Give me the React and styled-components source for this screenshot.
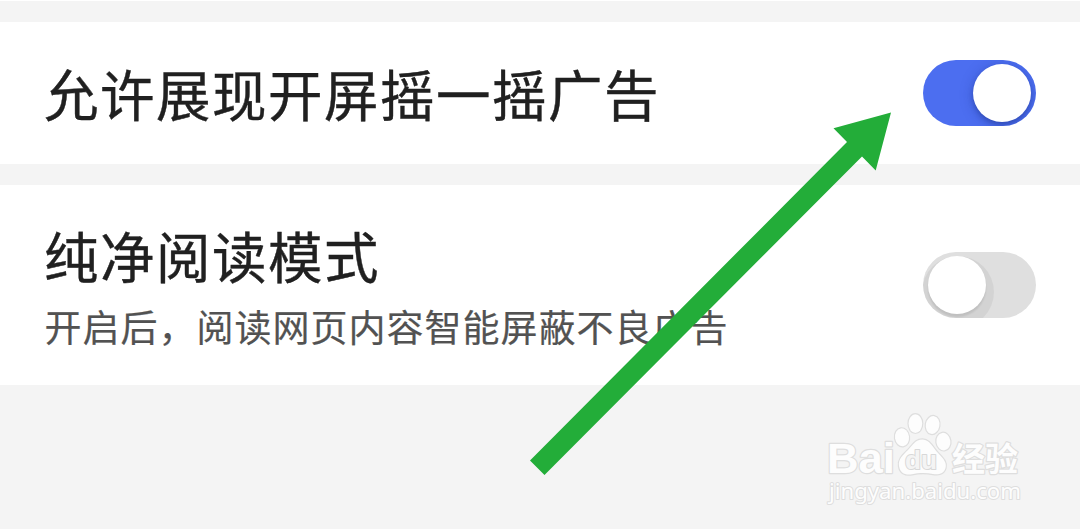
import React from "react";
import styled, { createGlobalStyle } from "styled-components";

const GlobalStyle = createGlobalStyle`
  * { box-sizing: border-box; }
  body {
    margin: 0;
    background: #f4f4f4;
    font-family: "Noto Sans CJK SC", sans-serif;
  }
`;

const Page = styled.main`
  position: relative;
  display: flex;
  flex-direction: column;
  gap: 21px;
  width: 1080px;
  height: 529px;
  overflow: hidden;
  background: #f4f4f4;
  border-top: 1px solid #fff;
  padding-top: 21px;
`;

const SettingRow = styled.section`
  display: flex;
  flex: none;
  align-items: center;
  justify-content: space-between;
  height: ${(p) => p.$height}px;
  padding: 0 44px;
  background: #fff;
`;

const Labels = styled.div`
  display: flex;
  flex-direction: column;
  gap: 13px;
  padding-top: ${(p) => p.$drop || 0}px;
`;

const Title = styled.h2`
  margin: 0;
  font-size: 54.5px;
  font-weight: 400;
  line-height: 64px;
  letter-spacing: 1.5px;
  white-space: nowrap;
  color: #202020;
  -webkit-text-stroke: 0.4px #202020;
`;

const Description = styled.p`
  margin: 0;
  font-size: 37px;
  line-height: 52px;
  letter-spacing: 1px;
  text-indent: 0.5px;
  white-space: nowrap;
  color: #525252;
  -webkit-text-stroke: 0.2px #525252;
`;

const Track = styled.button`
  display: flex;
  align-items: center;
  justify-content: ${(p) => (p.$on ? "flex-end" : "flex-start")};
  width: 113px;
  height: 66px;
  padding: 0 5px;
  margin: 0 0 ${(p) => (p.$on ? 0 : "1px")};
  border: 0;
  border-radius: 33px;
  overflow: hidden;
  background: ${(p) => (p.$on ? "#4c6ef0" : "#dfdfdf")};
`;

const Knob = styled.span`
  width: 58px;
  height: 58px;
  border-radius: 50%;
  background: #fff;
  box-shadow: ${(p) =>
    p.$on
      ? "0 3px 5px rgba(20, 40, 120, 0.35), 0 2px 14px rgba(20, 40, 120, 0.25)"
      : "0 3px 2px rgba(0, 0, 0, 0.09), 1px 7px 0 7px rgba(0, 0, 0, 0.05)"};
`;

const Overlay = styled.svg`
  position: absolute;
  top: -1px;
  left: 0;
  pointer-events: none;
`;

function Toggle({ on, label }) {
  return (
    <Track $on={on} role="switch" aria-checked={on} aria-label={label}>
      <Knob $on={on} />
    </Track>
  );
}

function Watermark() {
  return (
    <g fill="#fdfdfd" stroke="#dedede" strokeWidth="2.4" strokeLinejoin="round" paintOrder="stroke">
      <text x="827" y="472.5" fontFamily="Liberation Sans, sans-serif" fontWeight="700" fontSize="43" textLength="68" lengthAdjust="spacingAndGlyphs">Bai</text>
      <ellipse cx="902" cy="437.3" rx="7" ry="9" transform="rotate(-8 902 437.3)" />
      <ellipse cx="915.4" cy="423.6" rx="6.8" ry="9.3" />
      <ellipse cx="932.6" cy="425" rx="6.8" ry="9" transform="rotate(10 932.6 425)" />
      <ellipse cx="943.4" cy="441.6" rx="7" ry="8.8" transform="rotate(-8 943.4 441.6)" />
      <path d="M922.5 439.5C930 439.5 933 448 938 453C944 459 947 463 945.5 468C944 474 938 475 933 474C926 472.5 918 472.8 912 474.3C905 475.5 900 473 899 466C898 459 903 455 908 450C913 445 915 439.5 922.5 439.5Z" />
      <text x="905" y="468.5" fill="#f4f4f4" stroke="#d8d8d8" strokeWidth="2" fontFamily="Liberation Sans, sans-serif" fontWeight="700" fontSize="26" textLength="32" lengthAdjust="spacingAndGlyphs">du</text>
      <text x="952" y="470.5" fontFamily="Noto Sans CJK SC, sans-serif" fontWeight="700" fontSize="33">经验</text>
      <text x="829" y="499" strokeWidth="2" fontFamily="Noto Sans, sans-serif" fontSize="22" textLength="192" lengthAdjust="spacingAndGlyphs">jingyan.baidu.com</text>
    </g>
  );
}

export default function App() {
  return (
    <>
      <GlobalStyle />
      <Page>
        <SettingRow $height={142}>
          <Labels>
            <Title>允许展现开屏摇一摇广告</Title>
          </Labels>
          <Toggle on label="允许展现开屏摇一摇广告" />
        </SettingRow>
        <SettingRow $height={200}>
          <Labels $drop={5}>
            <Title>纯净阅读模式</Title>
            <Description>开启后，阅读网页内容智能屏蔽不良广告</Description>
          </Labels>
          <Toggle on={false} label="纯净阅读模式" />
        </SettingRow>
        <Overlay width="1080" height="529" viewBox="0 0 1080 529">
          <Watermark />
          <path d="M530 460.5L847 142L833.5 128.3L891 112.5L875.7 170.5L862 156.5L544.5 475Z" fill="#23ad39" />
        </Overlay>
      </Page>
    </>
  );
}
